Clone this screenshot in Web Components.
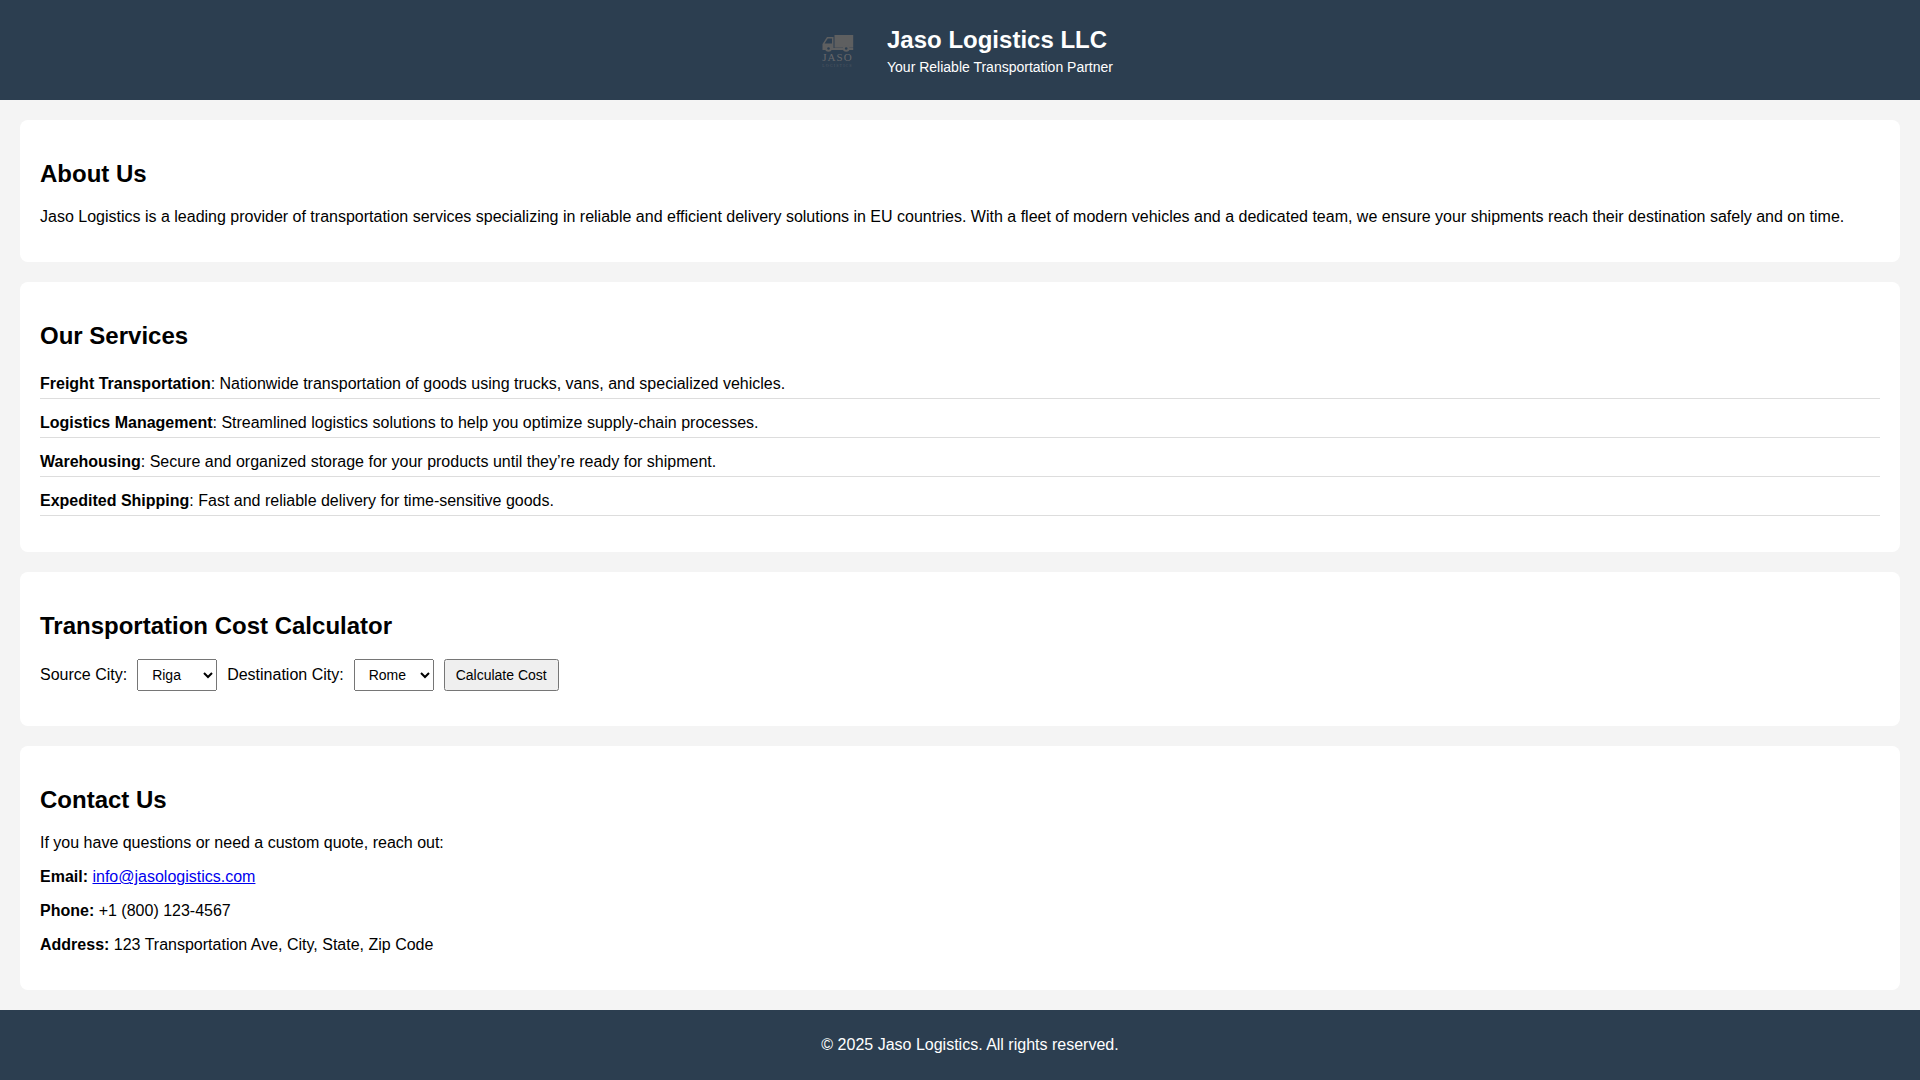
<!DOCTYPE html>
<html lang="en">
<head>
<meta charset="utf-8">
<title>Jaso Logistics LLC</title>
<style>
  html, body { margin: 0; padding: 0; }
  body {
    background: #f4f4f4;
    color: #000;
    font-family: "Liberation Sans", Arial, sans-serif;
    font-size: 16px;
  }
</style>
</head>
<body>
<site-header title-text="Jaso Logistics LLC" tagline="Your Reliable Transportation Partner"></site-header>
<main>
  <info-section heading="About Us">
    <p>Jaso Logistics is a leading provider of transportation services specializing in reliable and efficient delivery solutions in EU countries. With a fleet of modern vehicles and a dedicated team, we ensure your shipments reach their destination safely and on time.</p>
  </info-section>
  <info-section heading="Our Services">
    <service-list>
      <service-item name="Freight Transportation">Nationwide transportation of goods using trucks, vans, and specialized vehicles.</service-item>
      <service-item name="Logistics Management">Streamlined logistics solutions to help you optimize supply-chain processes.</service-item>
      <service-item name="Warehousing">Secure and organized storage for your products until they’re ready for shipment.</service-item>
      <service-item name="Expedited Shipping">Fast and reliable delivery for time-sensitive goods.</service-item>
    </service-list>
  </info-section>
  <info-section heading="Transportation Cost Calculator">
    <cost-calculator></cost-calculator>
  </info-section>
  <info-section heading="Contact Us">
    <p>If you have questions or need a custom quote, reach out:</p>
    <p><b>Email:</b> <a href="#">info@jasologistics.com</a></p>
    <p><b>Phone:</b> +1 (800) 123-4567</p>
    <p><b>Address:</b> 123 Transportation Ave, City, State, Zip Code</p>
  </info-section>
</main>
<site-footer>© 2025 Jaso Logistics. All rights reserved.</site-footer>

<script>
class SiteHeader extends HTMLElement {
  constructor () {
    super();
    this.attachShadow({ mode: 'open' });
  }

  connectedCallback () {
    this.shadowRoot.innerHTML = `
      <style>
        :host { display: block; background: #2c3e50; color: #fff; }
        .bar { display: flex; justify-content: center; align-items: center; height: 100px; }
        svg { width: 60px; height: 60px; margin-right: 20px; display: block; }
        .brand { padding-top: 1px; }
        h1 { margin: 0 0 5px; font-size: 24px; line-height: 28px; font-weight: bold; }
        p { margin: 0; font-size: 14px; line-height: 16px; }
      </style>
      <div class="bar">
        <svg viewBox="0 0 60 60" aria-hidden="true">
          <g fill="#5e5f60">
            <rect x="27.500" y="15" width="18.700" height="12.700"/>
            <path d="M26.500 17 L20 17 L15.500 24 L15.500 30 L26.500 30 Z"/>
            <rect x="26" y="28" width="20.200" height="2"/>
            <circle cx="21.500" cy="28.500" r="3.300"/>
            <circle cx="39.200" cy="28.500" r="3.300"/>
          </g>
          <path d="M20.800 18.500 L25 18.500 L25 23.500 L17.600 23.500 Z" fill="#2c3e50"/>
          <circle cx="21.500" cy="28.500" r="1.300" fill="#2c3e50"/>
          <circle cx="39.200" cy="28.500" r="1.300" fill="#2c3e50"/>
          <text x="30.500" y="41" text-anchor="middle" fill="#66676a" font-family="Liberation Serif, serif" font-size="11" letter-spacing="1">JASO</text>
          <text x="30.500" y="47" text-anchor="middle" fill="#4f5964" font-family="Liberation Serif, serif" font-size="4" letter-spacing="1.100">LOGISTICS</text>
        </svg>
        <div class="brand">
          <h1>${this.getAttribute('title-text')}</h1>
          <p>${this.getAttribute('tagline')}</p>
        </div>
      </div>`;
  }
}

class InfoSection extends HTMLElement {
  constructor () {
    super();
    this.attachShadow({ mode: 'open' });
  }

  connectedCallback () {
    this.shadowRoot.innerHTML = `
      <style>
        :host {
          display: block;
          margin: 20px;
          padding: 20px;
          background: #fff;
          border-radius: 8px;
        }
        h2 { margin: 19.92px 0; font-size: 24px; font-weight: bold; }
        ::slotted(p) { margin: 16px 0; }
      </style>
      <h2>${this.getAttribute('heading')}</h2>
      <slot></slot>`;
  }
}

class ServiceList extends HTMLElement {
  constructor () {
    super();
    this.attachShadow({ mode: 'open' });
  }

  connectedCallback () {
    this.shadowRoot.innerHTML = `
      <style>
        :host { display: block; margin: 16px 0; }
      </style>
      <slot></slot>`;
  }
}

class ServiceItem extends HTMLElement {
  constructor () {
    super();
    this.attachShadow({ mode: 'open' });
  }

  connectedCallback () {
    this.shadowRoot.innerHTML = `
      <style>
        :host { display: block; padding: 5px 0; margin-bottom: 10px; border-bottom: 1px solid #ddd; }
        b { font-weight: bold; }
      </style>
      <b>${this.getAttribute('name')}</b>: <slot></slot>`;
  }
}

class CostCalculator extends HTMLElement {
  constructor () {
    super();
    this.attachShadow({ mode: 'open' });
  }

  connectedCallback () {
    this.shadowRoot.innerHTML = `
      <style>
        :host { display: block; margin-bottom: 15px; }
        form { display: flex; align-items: center; }
        label { margin-right: 10px; }
        select {
          width: 80px;
          height: 32px;
          margin-right: 10px;
          padding: 5px 10px;
          box-sizing: border-box;
          font-family: "Liberation Sans", Arial, sans-serif;
          font-size: 14px;
        }
        button {
          height: 32px;
          padding: 5px 10px;
          box-sizing: border-box;
          font-family: "Liberation Sans", Arial, sans-serif;
          font-size: 14px;
        }
      </style>
      <form onsubmit="return false">
        <label for="source">Source City:</label>
        <select id="source"><option>Riga</option><option>Rome</option></select>
        <label for="destination">Destination City:</label>
        <select id="destination"><option>Rome</option><option>Riga</option></select>
        <button type="button">Calculate Cost</button>
      </form>`;
  }
}

class SiteFooter extends HTMLElement {
  constructor () {
    super();
    this.attachShadow({ mode: 'open' });
  }

  connectedCallback () {
    this.shadowRoot.innerHTML = `
      <style>
        :host { display: block; margin-top: 20px; padding: 20px 0 21px 20px; background: #2c3e50; color: #fff; text-align: center; }
        p { margin: 6px 0; }
      </style>
      <p><slot></slot></p>`;
  }
}

customElements.define('site-header', SiteHeader);
customElements.define('info-section', InfoSection);
customElements.define('service-list', ServiceList);
customElements.define('service-item', ServiceItem);
customElements.define('cost-calculator', CostCalculator);
customElements.define('site-footer', SiteFooter);
</script>
</body>
</html>
